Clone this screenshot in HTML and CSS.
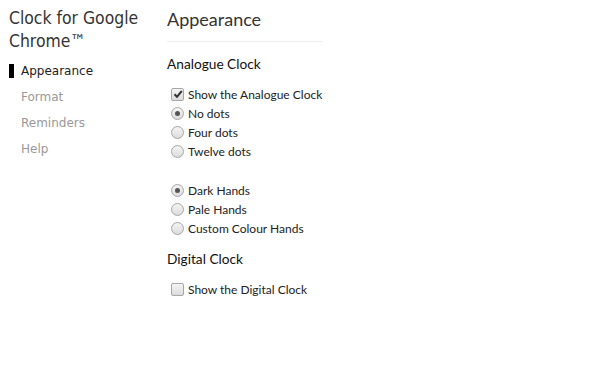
FILE: index.html
```html
<!DOCTYPE html>
<html>
<head>
<meta charset="utf-8">
<link rel="stylesheet" href="styles.css">
</head>
<body>
<div class="page">
  <nav class="sidebar">
    <h1 class="app-title">Clock for Google Chrome™</h1>
    <ul class="nav">
      <li class="nav-item active">Appearance</li>
      <li class="nav-item">Format</li>
      <li class="nav-item">Reminders</li>
      <li class="nav-item">Help</li>
    </ul>
  </nav>
  <main class="content">
    <h2 class="page-title">Appearance</h2>
    <section class="section">
      <h3 class="section-title first">Analogue Clock</h3>
      <div class="options first">
        <label class="option"><span class="check checked"><svg viewBox="0 0 12 12" width="12" height="12"><path d="M2.5 6.2 L5 8.8 L9.8 3" fill="none" stroke="#333" stroke-width="2"/></svg></span>Show the Analogue Clock</label>
        <label class="option"><span class="radio checked"></span>No dots</label>
        <label class="option"><span class="radio"></span>Four dots</label>
        <label class="option"><span class="radio"></span>Twelve dots</label>
      </div>
      <div class="options group2">
        <label class="option"><span class="radio checked"></span>Dark Hands</label>
        <label class="option"><span class="radio"></span>Pale Hands</label>
        <label class="option"><span class="radio"></span>Custom Colour Hands</label>
      </div>
    </section>
    <section class="section">
      <h3 class="section-title">Digital Clock</h3>
      <div class="options last">
        <label class="option"><span class="check"></span>Show the Digital Clock</label>
      </div>
    </section>
  </main>
</div>
</body>
</html>
```
FILE: styles.css
```css
html, body {
  margin: 0;
  padding: 0;
  background: #fff;
}
.page {
  display: flex;
  font-family: "Lato", "Open Sans", sans-serif;
  color: #222;
}
.sidebar {
  width: 167px;
  flex: none;
  padding-left: 9px;
  box-sizing: border-box;
  font-family: "DejaVu Sans", sans-serif;
}
.app-title {
  margin: 7px 0 0;
  font-family: "DejaVu Sans Condensed", "DejaVu Sans", sans-serif;
  font-size: 17.4px;
  font-weight: normal;
  line-height: 23px;
  color: #333;
}
.nav {
  list-style: none;
  margin: 5px 0 0;
  padding: 0;
}
.nav-item {
  font-size: 12px;
  line-height: 26px;
  padding-left: 12px;
  color: #999;
  position: relative;
}
.nav-item.active {
  color: #222;
}
.nav-item.active::before {
  content: "";
  position: absolute;
  left: 0;
  top: 6px;
  width: 5px;
  height: 14px;
  background: #000;
}
.content {
  width: 156px;
  flex: none;
}
.page-title {
  margin: 6px 0 0;
  font-size: 18px;
  font-weight: normal;
  line-height: 26px;
  color: #333;
  padding-bottom: 9px;
  border-bottom: 1px solid #eee;
}
.section-title {
  margin: 11px 0 0;
  font-size: 13.7px;
  font-weight: normal;
  line-height: 20px;
  color: #111;
}
.section-title.first {
  margin-top: 12px;
}
.options {
  margin-top: 11px;
  padding-left: 4px;
  white-space: nowrap;
}
.options.first {
  margin-top: 11px;
}
.group2 {
  margin-top: 20px;
}
.option {
  display: flex;
  align-items: center;
  height: 19px;
  font-size: 12px;
  color: #222;
}
.check, .radio {
  flex: none;
  width: 11px;
  height: 11px;
  margin-right: 4px;
  border: 1px solid #a6a6a6;
  background: linear-gradient(#f4f4f4, #dcdcdc);
  box-sizing: content-box;
  position: relative;
}
.check {
  border-radius: 2px;
}
.check svg {
  position: absolute;
  left: 0;
  top: -1px;
}
.radio {
  border-radius: 50%;
}
.radio.checked::after {
  content: "";
  position: absolute;
  left: 3px;
  top: 3px;
  width: 5px;
  height: 5px;
  border-radius: 50%;
  background: #555;
}
```
